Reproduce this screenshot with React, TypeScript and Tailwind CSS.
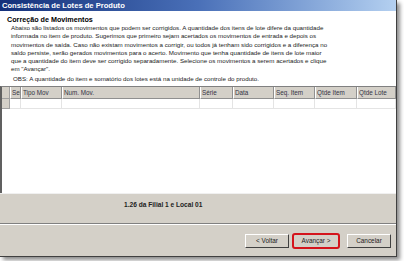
import React from 'react';

const lines = [
  'Abaixo são listados os movimentos que podem ser corrigidos. A quantidade dos itens de lote difere da quantidade',
  'informada no item de produto. Sugerimos que primeiro sejam acertados os movimentos de entrada e depois os',
  'movimentos de saída. Caso não existam movimentos a corrigir, ou todos já tenham sido corrigidos e a diferença no',
  'saldo persiste, serão gerados movimentos para o acerto. Movimento que tenha quantidade de itens de lote maior',
  'que a quantidade do item deve ser corrigido separadamente. Selecione os movimentos a serem acertados e clique',
  'em "Avançar".',
];

const columns = [
  { label: 'Sel', w: 'w-[11px]' },
  { label: 'Tipo Mov', w: 'w-[41px]' },
  { label: 'Num. Mov.', w: 'w-[138px]' },
  { label: 'Série', w: 'w-[33px]' },
  { label: 'Data', w: 'w-[41px]' },
  { label: 'Seq. Item', w: 'w-[41px]' },
  { label: 'Qtde Item', w: 'w-[42px]' },
  { label: 'Qtde Lote', w: 'flex-1' },
];

const Button = ({ label, highlight }: { label: string; highlight?: boolean }) => (
  <div
    className={`relative flex h-[14px] items-center justify-center border border-t-white border-l-white border-r-[#404040] border-b-[#404040] bg-[#d4d0c8] text-[6.4px] text-[#222] ${
      highlight ? 'w-[46px]' : 'w-[44px]'
    }`}
  >
    {label}
    {highlight && (
      <div className="absolute -inset-[2px] rounded-[3px] border-2 border-[#d4141c]" />
    )}
  </div>
);

export default function App() {
  return (
    <div className="h-[261px] w-[404px] overflow-hidden bg-white" style={{ fontFamily: '"Liberation Sans", Arial, sans-serif' }}>
      <div className="flex h-[257px] w-[397px] flex-col border-r border-b border-[#404040] bg-[#d4d0c8] shadow-[3px_3px_4px_rgba(0,0,0,0.45)]">
        {/* title bar */}
        <div className="flex h-[11px] items-center bg-gradient-to-r from-[#14307a] via-[#4a70b8] to-[#b4d0f0] pl-[2px] text-[7.6px] font-bold text-white">
          Consistência de Lotes de Produto
        </div>

        {/* header panel */}
        <div className="h-[75px] bg-white pt-[4px] text-[#222]">
          <div className="pl-[7px] text-[7.2px] font-bold leading-[9px] text-black">Correção de Movimentos</div>
          <div className="pl-[11px] text-[6.2px] leading-[8.3px]">
            {lines.map((l) => (
              <div key={l} className="whitespace-nowrap">{l}</div>
            ))}
            <div className="whitespace-nowrap pl-[2px] pt-[1px]">OBS: A quantidade do item e somatório dos lotes está na unidade de controle do produto.</div>
          </div>
        </div>

        {/* grid */}
        <div className="flex h-[107px] flex-col border-l-2 border-t border-l-[#606060] border-t-[#808080] bg-white">
          <div className="flex h-[12px] bg-[#d4d0c8]">
            <div className="w-[8px] border-r border-b border-[#a0a0a0]" />
            {columns.map((c) => (
              <div
                key={c.label}
                className={`${c.w} flex items-center overflow-hidden whitespace-nowrap border-r border-b border-l border-l-white border-r-[#909090] border-b-[#909090] pl-[1px] text-[6.3px] text-[#334]`}
              >
                {c.label}
              </div>
            ))}
          </div>
          <div className="flex h-[10px]">
            <div className="w-[8px] border-r border-b border-[#a0a0a0] bg-[#d4d0c8]" />
            {columns.map((c) => (
              <div key={c.label} className={`${c.w} border-r border-b border-[#e4e4e4]`} />
            ))}
          </div>
        </div>

        {/* status */}
        <div className="flex h-[30px] items-start border-t border-t-[#f0f0f0] pl-[124px] pt-[6px] text-[6.6px] font-bold text-[#222]">
          1.26 da Filial 1 e Local 01
        </div>

        {/* separator */}
        <div className="border-t border-b border-t-[#808080] border-b-white" />

        {/* buttons */}
        <div className="flex flex-1 items-start justify-end gap-[3px] pr-[5px] pt-[9px]">
          <Button label="< Voltar" />
          <div className="pl-[1px] pr-[5px]">
            <Button label="Avançar >" highlight />
          </div>
          <Button label="Cancelar" />
        </div>
      </div>
    </div>
  );
}
